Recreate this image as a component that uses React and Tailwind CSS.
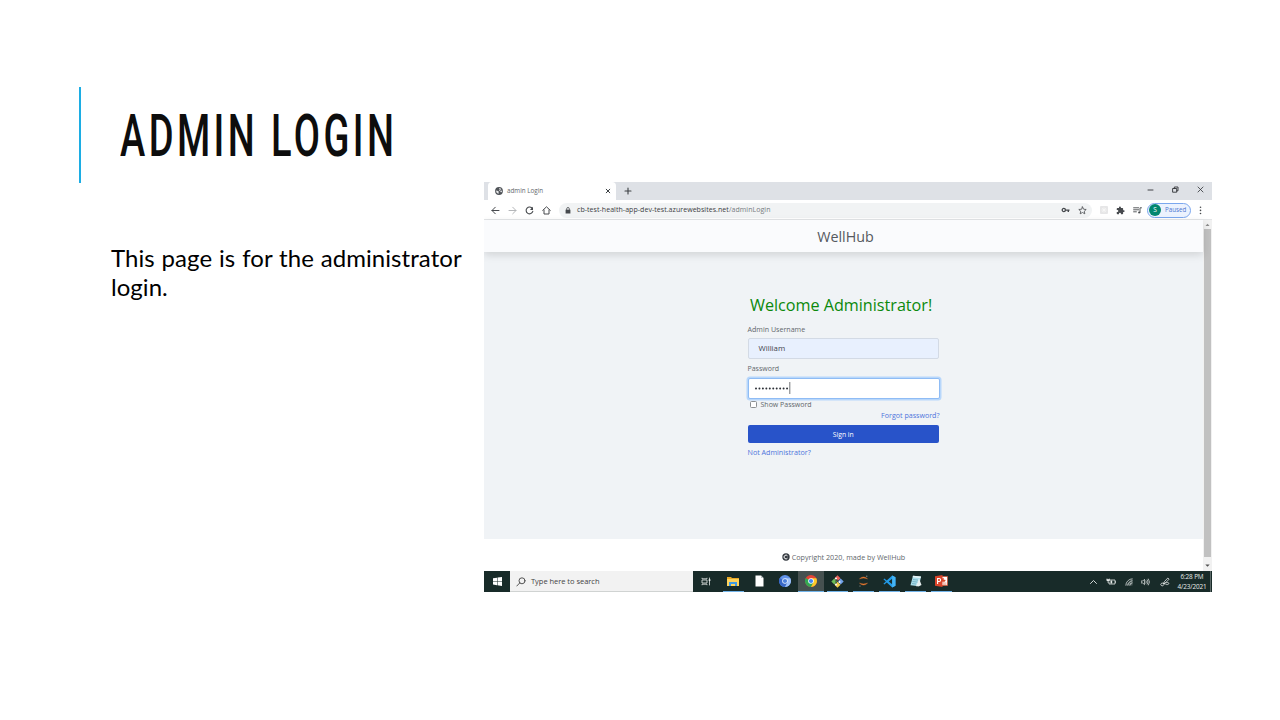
import React from 'react';

const stroke = { fill: 'none', stroke: 'currentColor', strokeLinecap: 'round', strokeLinejoin: 'round' };

function Globe() {
  return (
    <svg className="h-[8px] w-[8px]" viewBox="0 0 16 16">
      <circle cx="8" cy="8" r="7.8" fill="#505459" />
      <path d="M2 7l4 1 2 2-1 1v3L3 11zM9 2l4 2-3 2 1 2 3-1v2l-2 2-1-2-3-2 2-2-2-1z" fill="#e9eaec" />
    </svg>
  );
}

function TabStrip() {
  return (
    <div className="flex h-[18px] bg-[#dee1e6] pl-[4px]">
      <div className="flex w-[128px] items-center rounded-t-[4px] bg-white pl-[7px] pr-[5px]">
        <Globe />
        <span className="ml-[4px] flex-1 text-[6.3px] text-[#63676b]">admin Login</span>
        <svg className="h-[6px] w-[6px] text-[#3c4043]" viewBox="0 0 6 6" {...stroke}><path d="M1.200 1.200l3.600 3.600M4.800 1.200L1.200 4.800" strokeWidth="1" /></svg>
      </div>
      <svg className="ml-[8px] mt-[5px] h-[8px] w-[8px] text-[#3c4043]" viewBox="0 0 8 8" {...stroke}><path d="M4 1v6M1 4h6" strokeWidth="1.1" /></svg>
      <div className="ml-auto flex items-start gap-[18px] pr-[8px] pt-[4px] text-[#303236]">
        <svg className="h-[7px] w-[7px]" viewBox="0 0 7 7" {...stroke}><path d="M1 4h5" strokeWidth=".9" /></svg>
        <svg className="h-[7px] w-[7px]" viewBox="0 0 7 7" {...stroke}><path d="M1 2.5h3.7v3.7H1zM2.3 2.3V1H6v3.8H5" strokeWidth=".9" /></svg>
        <svg className="h-[7px] w-[7px]" viewBox="0 0 7 7" {...stroke}><path d="M1 1l5 5M6 1L1 6" strokeWidth=".8" /></svg>
      </div>
    </div>
  );
}

function Toolbar() {
  return (
    <div className="flex h-[20px] items-center border-b border-[#e3e5e7] bg-white pl-[7px] pt-px text-[#46494d]">
      <svg className="h-[9px] w-[9px]" viewBox="0 0 9 9" {...stroke}><path d="M8 4.5H1M4.3 1.2L1 4.5l3.3 3.3" strokeWidth="1" /></svg>
      <svg className="ml-[8px] h-[9px] w-[9px] text-[#b4b6b9]" viewBox="0 0 9 9" {...stroke}><path d="M1 4.500h7M4.700 1.200L8 4.500 4.700 7.800" strokeWidth="1" /></svg>
      <svg className="ml-[8px] h-[9px] w-[9px]" viewBox="0 0 9 9" {...stroke}><path d="M7.400 2.600A3.400 3.400 0 1 0 7.800 5.400" strokeWidth="1.1" /><path d="M8 .8v3.100H4.900z" fill="currentColor" stroke="none" /></svg>
      <svg className="ml-[8px] h-[9px] w-[9px]" viewBox="0 0 9 9" {...stroke}><path d="M.7 4.400l3.800-3.600 3.800 3.600M2 4v4h5V4" strokeWidth="1" /></svg>
      <div className="ml-[8px] flex h-[15px] w-[533px] items-center rounded-full bg-[#f1f3f4] pl-[6px] pr-[5px]">
        <svg className="h-[7px] w-[6px]" viewBox="0 0 6 7"><path d="M.6 2.700h4.800v3.800H.6z" fill="currentColor" /><path d="M1.700 3V1.800a1.300 1.300 0 0 1 2.600 0V3" fill="none" stroke="currentColor" strokeWidth=".8" /></svg>
        <span className="ml-[6px] text-[7px] tracking-[0.055px] text-[#3c4043]">cb-test-health-app-dev-test.azurewebsites.net<span className="text-[#777b7f]">/adminLogin</span></span>
        <svg className="ml-auto h-[6px] w-[9px]" viewBox="0 0 9 6"><circle cx="2.8" cy="3" r="1.6" fill="none" stroke="currentColor" strokeWidth="1.3" /><path d="M4.300 2.400h4.200v1.400H8v1.300H6.600V3.800H4.300z" fill="currentColor" /></svg>
        <svg className="ml-[8px] h-[9px] w-[9px]" viewBox="0 0 9 9" {...stroke}><path d="M4.500.9l1.100 2.300 2.600.3-1.900 1.700.5 2.600-2.300-1.300-2.300 1.300.5-2.600L.8 3.500l2.600-.3z" strokeWidth=".8" /></svg>
      </div>
      <svg className="ml-[8px] h-[8px] w-[8px]" viewBox="0 0 8 8"><rect width="8" height="8" rx="1" fill="#e6e6e7" /><path d="M4 1.500v5M1.500 4h5M2.200 2.200l3.600 3.600M5.800 2.200L2.200 5.800" stroke="#f7f7f7" strokeWidth=".8" /></svg>
      <svg className="ml-[8px] h-[9px] w-[9px]" viewBox="0 0 24 24"><path fill="currentColor" d="M20.500 11H19V7a2 2 0 0 0-2-2h-4V3.500a2.500 2.500 0 0 0-5 0V5H4a2 2 0 0 0-2 2v3.800h1.500a2.700 2.700 0 0 1 0 5.400H2V20a2 2 0 0 0 2 2h3.800v-1.500a2.700 2.700 0 0 1 5.400 0V22H17a2 2 0 0 0 2-2v-4h1.500a2.500 2.500 0 0 0 0-5z" /></svg>
      <svg className="ml-[8px] h-[9px] w-[9px]" viewBox="0 0 9 9" {...stroke}><path d="M.6 1.800h5M.6 3.800h5M.6 5.800h2.800M7 6.500V1.800h1.500" strokeWidth=".9" /><circle cx="6.100" cy="6.600" r="1" fill="currentColor" stroke="none" /></svg>
      <div className="ml-[5px] flex h-[15px] w-[44px] items-center rounded-full border border-[#7ba7ee] bg-[#ebf2fe] pl-px">
        <span className="flex h-[12px] w-[12px] items-center justify-center rounded-full bg-[#028770] text-[6.500px] text-white">S</span>
        <span className="ml-[4px] text-[6.200px] text-[#4c75cf]">Paused</span>
      </div>
      <svg className="ml-[8px] h-[9px] w-[3px]" viewBox="0 0 3 9" fill="currentColor"><circle cx="1.500" cy="1.300" r=".8" /><circle cx="1.500" cy="4.400" r=".8" /><circle cx="1.500" cy="7.500" r=".8" /></svg>
    </div>
  );
}

function LoginForm() {
  return (
    <div className="ml-[263.500px] w-[192px] text-[7px] leading-[10px] text-[#62676c]">
      <h2 className="pl-[2.500px] text-[16.200px] leading-[24px] tracking-[-0.020px] text-[#0b890b]">Welcome Administrator!</h2>
      <div className="mt-[7px] text-[7.100px]">Admin Username</div>
      <div className="mr-[0.500px] mt-[3.500px] flex h-[21px] items-center rounded-[2px] border border-[#d3dae5] bg-[#e8f0fe] pl-[10px] text-[7.800px] text-[#3e444c]">William</div>
      <div className="mt-[5.500px]">Password</div>
      <div className="mt-[3.500px] flex h-[21px] items-center rounded-[2px] border border-[#8fbcf5] bg-white pl-[5px] shadow-[0_0_0_1.500px_#b8d7fb]">
        <svg className="h-[12px] w-[37px]" viewBox="0 0 37 12">
          <path d="M2 6.500h33" stroke="#2e3238" strokeWidth="2" strokeLinecap="round" strokeDasharray="0 3.450" />
          <path d="M35.800 0v12" stroke="#4f5357" strokeWidth=".8" />
        </svg>
      </div>
      <div className="mt-[0.500px] flex h-[11px] items-center pl-[2px]">
        <span className="h-[7px] w-[7px] rounded-[1.500px] border border-[#8c8f92] bg-white" />
        <span className="ml-[4px]">Show Password</span>
      </div>
      <div className="text-right text-[7.100px] text-[#4e74dc]">Forgot password?</div>
      <div className="mr-[0.500px] mt-[5px] h-[17.500px] rounded-[2px] bg-[#2853c9] text-center text-[6.800px] leading-[19px] text-white">Sign in</div>
      <div className="mt-[4.500px] text-[7.150px] text-[#4e74dc]">Not Administrator?</div>
    </div>
  );
}

function WebPage() {
  return (
    <div className="flex h-[351px]">
      <div className="flex w-[719px] flex-col">
        <div className="relative h-[32px] bg-[#fafbfd] pl-[4px] text-center text-[14.300px] leading-[34px] text-[#55595f] shadow-[0_3px_8px_rgba(0,0,0,0.13)]">WellHub</div>
        <div className="h-[287px] bg-[#f0f3f6] pt-[41px]"><LoginForm /></div>
        <div className="flex flex-1 items-center justify-center bg-white pt-[4px] text-[7.180px] text-[#62676c]">
          <svg className="mr-[2px] h-[8px] w-[8px]" viewBox="0 0 8 8"><circle cx="4" cy="4" r="3.700" fill="#353a40" /><path d="M5.500 2.900a1.900 1.900 0 1 0 0 2.200" fill="none" stroke="#fff" strokeWidth="1" /></svg>
          <span>Copyright 2020, made by WellHub</span>
        </div>
      </div>
      <div className="flex w-[9px] flex-col items-center bg-[#f1f1f1]">
        <svg className="h-[9px] w-[9px]" viewBox="0 0 9 9"><path d="M2.500 6L4.500 3.800 6.500 6z" fill="#8b8b8b" /></svg>
        <div className="h-[328px] w-[7px] bg-[#c1c1c1]" />
        <svg className="mt-[4px] h-[9px] w-[9px]" viewBox="0 0 9 9"><path d="M2.300 3.500h4.400L4.500 5.800z" fill="#505050" /></svg>
      </div>
    </div>
  );
}

function AppButton({ children, running, active }) {
  return (
    <div className={active ? 'flex h-full w-[26px] flex-col items-center bg-[#465150]' : 'flex h-full w-[26px] flex-col items-center'}>
      <div className="flex flex-1 items-center">{children}</div>
      <div className={running ? (active ? 'h-px w-[26px] bg-[#72b4ea]' : 'h-px w-[21px] bg-[#72b4ea]') : 'h-px'} />
    </div>
  );
}

function Taskbar() {
  return (
    <div className="flex h-[21px] bg-[#182b29] text-[#e7ebea]">
      <div className="flex w-[26px] items-center justify-center">
        <svg className="h-[9px] w-[9px]" viewBox="0 0 9 9" fill="#fff"><path d="M0 1.300L4 .7v3.500H0zM4.500.6L9 0v4.200H4.500zM0 4.700h4v3.500l-4-.6zM4.500 4.700H9V9l-4.500-.7z" /></svg>
      </div>
      <div className="flex w-[183px] items-center border-b border-[#d0d3d2] bg-[#f2f2f2] pl-[6px] pt-px text-[#444]">
        <svg className="h-[10px] w-[10px]" viewBox="0 0 10 10" {...stroke}><circle cx="6" cy="3.800" r="3" strokeWidth=".9" /><path d="M3.700 6L.8 9" strokeWidth=".9" /></svg>
        <span className="ml-[5px] text-[7.500px] tracking-[-0.030px]">Type here to search</span>
      </div>
      <AppButton>
        <svg className="h-[9px] w-[10px]" viewBox="0 0 10 9" {...stroke}><path d="M1 .8v1h5v-1M1 8.200v-1h5v1M1 3h5v3H1zM8.500.6v7.800" strokeWidth=".8" strokeLinecap="butt" /><rect x="7.700" y="2.300" width="1.700" height="1.700" fill="currentColor" stroke="none" /></svg>
      </AppButton>
      <div className="w-px" />
      <AppButton running>
        <svg className="h-[11px] w-[12px]" viewBox="0 0 12 11"><path d="M0 1h4l1 1h7v8H0z" fill="#e9a927" /><path d="M0 3h12v7H0z" fill="#ffd45c" /><path d="M2 10V6h8v4H8V8H4v2z" fill="#3f9be5" /></svg>
      </AppButton>
      <AppButton>
        <svg className="h-[12px] w-[9px]" viewBox="0 0 9 12"><path d="M.5.500H6L8.500 3v8.500h-8z" fill="#fff" /><path d="M6 .5V3h2.500z" fill="#bbc3c3" /></svg>
      </AppButton>
      <AppButton>
        <svg className="h-[12px] w-[12px]" viewBox="0 0 12 12"><circle cx="6" cy="6" r="6" fill="#5f91e8" /><path d="M6 6L.8 3A6 6 0 0 0 6 12l2.600-4.500z" fill="#3868c8" /><path d="M6 3.300h5.300A6 6 0 0 1 6 12l2.300-4.600z" fill="#9fc2fa" /><circle cx="6" cy="6" r="2.800" fill="#e6effd" /><circle cx="6" cy="6" r="2.100" fill="#4b80dc" /></svg>
      </AppButton>
      <AppButton running active>
        <svg className="h-[12px] w-[12px]" viewBox="0 0 12 12"><circle cx="6" cy="6" r="6" fill="#e64435" /><path d="M6 6L.8 3A6 6 0 0 0 6 12l2.600-4.500z" fill="#32a853" /><path d="M6 3.300h5.300A6 6 0 0 1 6 12l2.300-4.600z" fill="#fbcb28" /><circle cx="6" cy="6" r="2.800" fill="#fff" /><circle cx="6" cy="6" r="2.100" fill="#4285f4" /></svg>
      </AppButton>
      <AppButton running>
        <svg className="h-[13px] w-[13px]" viewBox="0 0 13 13"><path d="M6.500.3l3 3-3 3-3-3z" fill="#e96159" /><path d="M3.300 3.500l3 3-3 3-3-3z" fill="#6cbd57" /><path d="M9.700 3.500l3 3-3 3-3-3z" fill="#71a2e8" /><path d="M6.500 6.700l3 3-3 3-3-3z" fill="#f3cc48" /><path d="M5 3v7M5 4l3.500 3" stroke="#24302e" strokeWidth=".8" fill="none" /><circle cx="5" cy="3.500" r="1" fill="#fff" /><circle cx="5" cy="9.500" r="1" fill="#fff" /><circle cx="8.500" cy="7" r="1" fill="#fff" /></svg>
      </AppButton>
      <AppButton running>
        <svg className="h-[12px] w-[11px]" viewBox="0 0 11 12"><path d="M1.500 3.800q4-3.600 8 0-4-1.500-8 0zM1.500 8.200q4 3.600 8 0-4 1.500-8 0z" fill="#ef7b2f" stroke="#ef7b2f" strokeWidth=".4" /><circle cx="8.800" cy="1.200" r=".6" fill="#9ba09f" /><circle cx="2" cy="11" r=".6" fill="#9ba09f" /></svg>
      </AppButton>
      <AppButton running>
        <svg className="h-[13px] w-[13px]" viewBox="0 0 24 24"><path d="M17 1l6 3v16l-6 3L7 14l-4.500 3.500L.8 16l4.500-4L.8 8l1.700-1.500L7 10zM17 7l-6.500 5 6.500 5z" fill="#229be8" fillRule="evenodd" /><path d="M17 1l6 3v16l-6 3z" fill="#44b4f4" /></svg>
      </AppButton>
      <AppButton running>
        <svg className="h-[12px] w-[13px]" viewBox="0 0 13 12"><path d="M4 .8l8 .8-2 9.600-8.500-1z" fill="#a9dce8" /><path d="M4 .8l8 .8-.3 1.600-8-.9z" fill="#e8f3f4" /><path d="M10 3.500L12.500 10 10 11.200H7z" fill="#e6eeee" /><path d="M4 4.500l5 .6M3.500 6.500l5 .6M3 8.500l4 .5" stroke="#5799af" strokeWidth=".6" /></svg>
      </AppButton>
      <AppButton running>
        <svg className="h-[12px] w-[13px]" viewBox="0 0 13 12"><path d="M6 1.500h6.500v9H6z" fill="#fff" stroke="#d64a2a" strokeWidth=".7" /><path d="M8.500 3.200a1.800 1.800 0 1 0 1.800 1.800H8.500zM8 8h3.500M8 9.300h3.500" fill="#d64a2a" stroke="#d64a2a" strokeWidth=".5" /><path d="M0 1.200L7.500 0v12L0 10.800z" fill="#d9442a" /><path d="M2.600 9V3.500h1.500a1.500 1.500 0 0 1 0 3H2.600" fill="none" stroke="#fff" strokeWidth="1.100" /></svg>
      </AppButton>
      <div className="ml-auto flex items-center">
        <svg className="h-[8px] w-[9px]" viewBox="0 0 9 8" {...stroke}><path d="M1.500 5.500l3-3 3 3" strokeWidth=".9" /></svg>
        <svg className="ml-[8px] h-[8px] w-[10px]" viewBox="0 0 10 8" {...stroke}><path d="M4 2h5v4H3V4M9.600 3.500v1M1 1v1.300h2.300V1M2.100 2.300V4.500" strokeWidth=".8" /><path d="M.7 1.200h2.900v1.800H.7zM4.500 2.500h1.700v3H4.500z" fill="currentColor" stroke="none" /></svg>
        <svg className="ml-[9px] h-[8px] w-[8px]" viewBox="0 0 8 8" {...stroke}><path d="M.8 7.200A6.500 6.500 0 0 1 7.200.8M2.800 7.200a4.500 4.500 0 0 1 4.400-4.400M4.800 7.200A2.500 2.500 0 0 1 7.200 4.800" strokeWidth=".7" /><path d="M.5 7.500L7.500.5v7z" fill="currentColor" stroke="none" opacity=".25" /></svg>
        <svg className="ml-[8px] h-[8px] w-[9px]" viewBox="0 0 9 8" {...stroke}><path d="M.5 3h1.300L3.500 1.300v5.400L1.800 5H.5zM5 2.800q.9 1.200 0 2.400M6.300 1.800q1.600 2.200 0 4.400M7.500 1q2.200 3 0 6" strokeWidth=".7" /></svg>
        <svg className="ml-[10px] h-[10px] w-[10px]" viewBox="0 0 10 10" {...stroke}><path d="M3.500 6.500l1-2L7.800 1l1.300 1.200-3.500 3.600zM4 6.300C1 5.300 0 7.500 1.300 8.500s2.900-.4 3-2C6 5.500 9 5 8.800 6.500S6.500 7.500 6 7.500" strokeWidth=".8" /></svg>
        <div className="ml-[5px] w-[34px] text-center text-[6.400px] leading-[9.500px] tracking-[-0.150px]">
          <div>6:28 PM</div>
          <div>4/23/2021</div>
        </div>
      </div>
      <div className="ml-px w-[2px] border-l border-[#5d6a69]" />
    </div>
  );
}

export default function App() {
  return (
    <main className="flex h-[720px] w-[1280px] overflow-hidden bg-white">
      <section className="w-[484px] shrink-0 pl-[79px] pt-[87px]">
        <div className="flex h-[96px] items-center border-l-2 border-[#1cade4] pl-[39px]">
          <h1 className="mt-[2px] origin-left scale-x-[0.645] whitespace-nowrap font-['Roboto'] text-[59px] font-medium leading-[98px] tracking-[5.300px] text-[#0d0d0d]">ADMIN LOGIN</h1>
        </div>
        <p className="mt-[60px] whitespace-nowrap pl-[32px] font-['Lato',sans-serif] text-[24px] leading-[29px] tracking-[0.050px] [word-spacing:0.700px] text-black">
          This page is for the administrator<br />login.
        </p>
      </section>
      <section className="mt-[182px] h-[410px] w-[728px] shrink-0 overflow-hidden whitespace-nowrap font-['Open_Sans','Noto_Sans',sans-serif]">
        <TabStrip />
        <Toolbar />
        <WebPage />
        <Taskbar />
      </section>
    </main>
  );
}
